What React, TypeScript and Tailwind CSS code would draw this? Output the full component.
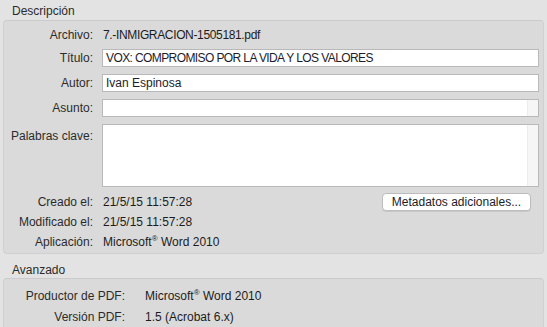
import React from "react";

const font = { fontFamily: '"Liberation Sans", Arial, sans-serif' };

const Label = ({ children, w = "w-[89px]" }: { children: React.ReactNode; w?: string }) => (
  <div className={`${w} shrink-0 text-right text-[#2b2b2b]`}>{children}</div>
);

const Field = ({ value = "", gutter = false, caps = false }: { value?: string; gutter?: boolean; caps?: boolean }) => (
  <div className="flex h-[18px] w-[437px] border border-[#b9b9b9] bg-white">
    <div className={`flex-1 truncate px-[3px] leading-[16px] text-[#1c1c2a] ${caps ? "tracking-[-0.6px]" : ""}`}>{value}</div>
    {gutter && <div className="w-[11px] border-l border-[#ececec] bg-[#f6f6f6]" />}
  </div>
);

const App = () => {
  return (
    <div className="h-[327px] w-[547px] overflow-hidden bg-[#e3e3e3] text-[12px]" style={font}>
      <div className="h-[20px] pl-[12px] leading-[22px] text-[#2b2b2b]">Descripción</div>

      <div className="mx-[3px] h-[234px] rounded-[4px] border border-[#d0d0d0] border-t-[#cbcbcb] bg-[#dadada]">
        <div className="mt-[6px] flex h-[16px] items-center gap-[10px] leading-[16px]">
          <Label>Archivo:</Label>
          <div className="tracking-[-0.35px] text-[#1c1c1c]">7.-INMIGRACION-1505181.pdf</div>
        </div>

        <div className="mt-[6px] flex items-center gap-[9px]">
          <Label>Título:</Label>
          <Field value="VOX: COMPROMISO POR LA VIDA Y LOS VALORES" caps />
        </div>

        <div className="mt-[7px] flex items-center gap-[9px]">
          <Label>Autor:</Label>
          <Field value="Ivan Espinosa" />
        </div>

        <div className="mt-[7px] flex items-center gap-[9px]">
          <Label>Asunto:</Label>
          <Field gutter />
        </div>

        <div className="mt-[7px] flex items-start gap-[9px]">
          <Label>
            <div className="pt-[3px]">Palabras clave:</div>
          </Label>
          <div className="flex h-[63px] w-[437px] border border-[#b9b9b9] bg-white">
            <div className="flex-1" />
            <div className="w-[11px] border-l border-[#ececec] bg-[#f6f6f6]" />
          </div>
        </div>

        <div className="mt-[6px] flex h-[18px] items-center gap-[10px]">
          <Label>Creado el:</Label>
          <div className="flex-1 text-[#1c1c1c]">21/5/15 11:57:28</div>
          <button className="mr-[12px] h-[18px] w-[149px] rounded-[4px] border border-[#bcbcbc] bg-white text-[12px] leading-[16px] text-[#1c1c2a] shadow-[0_1px_0_rgba(0,0,0,0.08)]">
            Metadatos adicionales...
          </button>
        </div>

        <div className="mt-[3px] flex h-[16px] items-center gap-[10px]">
          <Label>Modificado el:</Label>
          <div className="text-[#1c1c1c]">21/5/15 11:57:28</div>
        </div>

        <div className="mt-[4px] flex h-[16px] items-center gap-[10px]">
          <Label>Aplicación:</Label>
          <div className="text-[#1c1c1c]">
            Microsoft<span className="align-super text-[8px]">®</span> Word 2010
          </div>
        </div>
      </div>

      <div className="mt-[6px] h-[18px] pl-[12px] leading-[20px] text-[#2b2b2b]">Avanzado</div>

      <div className="mx-[3px] h-[60px] rounded-[4px] border border-[#d0d0d0] border-t-[#cbcbcb] bg-[#dadada]">
        <div className="mt-[9px] flex h-[16px] items-center gap-[20px]">
          <Label w="w-[121px]">Productor de PDF:</Label>
          <div className="text-[#1c1c1c]">
            Microsoft<span className="align-super text-[8px]">®</span> Word 2010
          </div>
        </div>
        <div className="mt-[5px] flex h-[16px] items-center gap-[20px]">
          <Label w="w-[121px]">Versión PDF:</Label>
          <div className="text-[#1c1c1c]">1.5 (Acrobat 6.x)</div>
        </div>
      </div>
    </div>
  );
};

export default App;
